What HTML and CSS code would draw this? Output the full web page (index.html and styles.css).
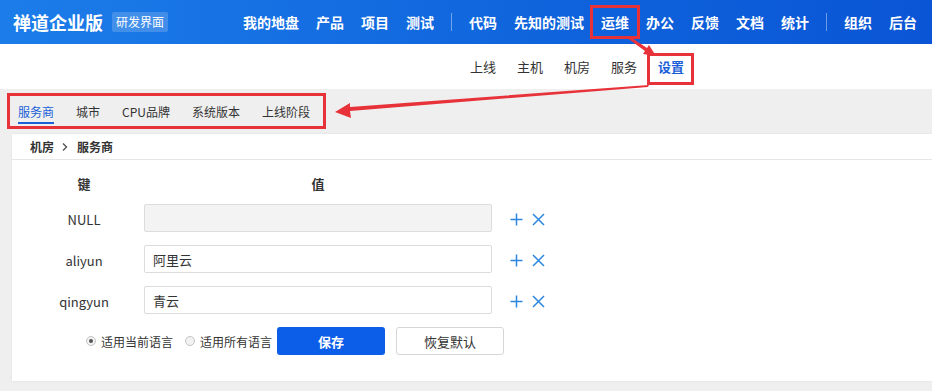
FILE: index.html
```html
<!DOCTYPE html>
<html lang="zh-CN">
  <head>
    <meta charset="UTF-8" />
    <meta name="viewport" content="width=device-width, initial-scale=1.0" />
    <title>服务商 - 禅道企业版</title>
    <link rel="stylesheet" href="styles.css">
  </head>
  <body>
    <div class="header">
      <div class="brand">禅道企业版</div>
      <span class="badge">研发界面</span>
      <nav class="main-nav">
        <a>我的地盘</a>
        <a>产品</a>
        <a>项目</a>
        <a>测试</a>
        <span class="divider"></span>
        <a>代码</a>
        <a>先知的测试</a>
        <a class="active">运维</a>
        <a>办公</a>
        <a>反馈</a>
        <a>文档</a>
        <a>统计</a>
        <span class="divider"></span>
        <a>组织</a>
        <a>后台</a>
      </nav>
    </div>

    <div class="subnav">
      <a>上线</a>
      <a>主机</a>
      <a>机房</a>
      <a>服务</a>
      <a class="active">设置</a>
    </div>

    <div class="tabs">
      <a class="active">服务商</a>
      <a>城市</a>
      <a>CPU品牌</a>
      <a>系统版本</a>
      <a>上线阶段</a>
    </div>

    <div class="card">
      <div class="breadcrumb">
        <span>机房</span>
        <svg class="sep" width="8" height="10" viewBox="0 0 8 10"><path d="M2 1.5 L5.5 5 L2 8.5" fill="none" stroke="#555" stroke-width="1.4" /></svg>
        <span>服务商</span>
      </div>

      <form class="lang-form">
        <div class="th">键</div>
        <div class="th">值</div>
        <div></div>

        <div class="key">NULL</div>
        <input type="text" class="field" disabled />
        <div class="actions">
          <svg width="13" height="13" viewBox="0 0 13 13"><path d="M6.5 0.5 V12.5 M0.5 6.5 H12.5" /></svg>
          <svg width="13" height="13" viewBox="0 0 13 13"><path d="M1 1 L12 12 M12 1 L1 12" /></svg>
        </div>

        <div class="key">aliyun</div>
        <input type="text" class="field" value="阿里云" />
        <div class="actions">
          <svg width="13" height="13" viewBox="0 0 13 13"><path d="M6.5 0.5 V12.5 M0.5 6.5 H12.5" /></svg>
          <svg width="13" height="13" viewBox="0 0 13 13"><path d="M1 1 L12 12 M12 1 L1 12" /></svg>
        </div>

        <div class="key">qingyun</div>
        <input type="text" class="field" value="青云" />
        <div class="actions">
          <svg width="13" height="13" viewBox="0 0 13 13"><path d="M6.5 0.5 V12.5 M0.5 6.5 H12.5" /></svg>
          <svg width="13" height="13" viewBox="0 0 13 13"><path d="M1 1 L12 12 M12 1 L1 12" /></svg>
        </div>

        <div class="footer-row">
          <label class="radio"><span class="dot checked"></span>适用当前语言</label>
          <label class="radio"><span class="dot"></span>适用所有语言</label>
          <button type="button" class="btn btn-primary">保存</button>
          <button type="button" class="btn btn-default">恢复默认</button>
        </div>
      </form>
    </div>

    <!-- screenshot annotations -->
    <svg class="marks" width="932" height="391" viewBox="0 0 932 391">
      <g fill="none" stroke="#e8323a" stroke-width="3">
        <rect x="591.5" y="6.5" width="47" height="31" />
        <rect x="648.5" y="54.5" width="44" height="29" />
        <rect x="8.5" y="94.5" width="316" height="33" />
      </g>
      <g fill="#e8323a">
        <polygon points="626,37 629,36 647,48 649,45 656,56 643,54 645,51" />
        <polygon points="649,85 648,87 350,111 351,118 335,112 350,103 350,107" />
      </g>
    </svg>
  </body>
</html>
```

FILE: styles.css
```css
* {
  margin: 0;
  padding: 0;
  box-sizing: border-box;
}

body {
  font-family: "Noto Sans CJK SC", "Noto Sans", sans-serif;
  background: #efefef;
  color: #333;
  width: 932px;
  height: 391px;
  overflow: hidden;
  position: relative;
}

a {
  cursor: pointer;
}

.header {
  height: 44px;
  background: linear-gradient(90deg, #1c7de9 0%, #0f63dc 60%, #0a55d5 100%);
  display: flex;
  align-items: center;
  padding: 0 15px 0 13px;
  color: white;
}

.brand {
  font-size: 18px;
  font-weight: 700;
}

.badge {
  margin-left: 9px;
  padding: 0 4px;
  height: 20px;
  line-height: 20px;
  font-size: 12px;
  background: rgba(255, 255, 255, 0.18);
  border-radius: 2px;
}

.main-nav {
  margin-left: auto;
  display: flex;
  align-items: center;
  gap: 17px;
}

.main-nav a {
  font-size: 14px;
  font-weight: 700;
  color: white;
}

.main-nav .divider {
  width: 1px;
  height: 18px;
  background: rgba(255, 255, 255, 0.4);
}

.subnav {
  height: 45px;
  background: white;
  display: flex;
  align-items: center;
  padding-left: 459px;
}

.subnav a {
  font-size: 13px;
  padding: 0 10px 0 11px;
  color: #333;
}

.subnav a.active {
  color: #1a5fd8;
  font-weight: 700;
}

.tabs {
  height: 45px;
  display: flex;
  align-items: center;
  gap: 22px;
  padding: 0 0 0 18px;
}

.tabs a {
  font-size: 12px;
  color: #333;
  line-height: 20px;
  padding-top: 2px;
  border-bottom: 2px solid transparent;
}

.tabs a.active {
  color: #1a5fd8;
  border-bottom-color: #1a5fd8;
}

.card {
  margin-left: 12px;
  background: white;
  height: 247px;
  box-shadow: 0 0 2px rgba(0, 0, 0, 0.08);
}

.breadcrumb {
  height: 26px;
  display: flex;
  align-items: center;
  padding: 0 18px;
  font-size: 12px;
  font-weight: 700;
  border-bottom: 1px solid #e6e6e6;
}

.breadcrumb .sep {
  margin: 0 8px 0 7px;
}

.lang-form {
  display: grid;
  grid-template-columns: 108px 348px 80px;
  column-gap: 6px;
  row-gap: 13px;
  padding: 12px 18px 0;
  align-items: center;
}

.th {
  text-align: center;
  font-size: 13px;
  font-weight: 700;
  height: 24px;
  line-height: 24px;
  margin-bottom: -5px;
}

.key {
  text-align: center;
  font-size: 13px;
  padding-top: 2px;
}

.field {
  height: 28px;
  border: 1px solid #dcdcdc;
  border-radius: 2px;
  padding: 0 8px;
  font-family: inherit;
  font-size: 13px;
  color: #333;
  background: white;
}

.field:disabled {
  background: #f3f3f3;
}

.actions {
  display: flex;
  align-items: center;
  gap: 9px;
  padding: 2px 0 0 12px;
}

.actions svg {
  fill: none;
  stroke: #2b86df;
  stroke-width: 1.5;
}

.footer-row {
  grid-column: 1 / -1;
  display: flex;
  align-items: center;
  padding-left: 56px;
  font-size: 12px;
}

.radio {
  display: flex;
  align-items: center;
  gap: 5px;
  margin-right: 12px;
  color: #333;
}

.radio:nth-child(2) {
  margin-right: 5px;
}

.dot {
  width: 10px;
  height: 10px;
  border: 1px solid #c4c4c4;
  border-radius: 50%;
  background: #f2f2f2;
  position: relative;
}

.dot.checked::after {
  content: "";
  position: absolute;
  left: 2px;
  top: 2px;
  width: 4px;
  height: 4px;
  border-radius: 50%;
  background: #555;
}

.btn {
  width: 108px;
  height: 28px;
  border-radius: 3px;
  font-family: inherit;
  font-size: 13px;
  cursor: pointer;
}

.btn-primary {
  background: #0c5de8;
  color: white;
  border: none;
  font-weight: 700;
  margin-right: 11px;
}

.btn-default {
  background: white;
  color: #333;
  border: 1px solid #d6d6d6;
}

.marks {
  position: absolute;
  left: 0;
  top: 0;
  pointer-events: none;
}
```
